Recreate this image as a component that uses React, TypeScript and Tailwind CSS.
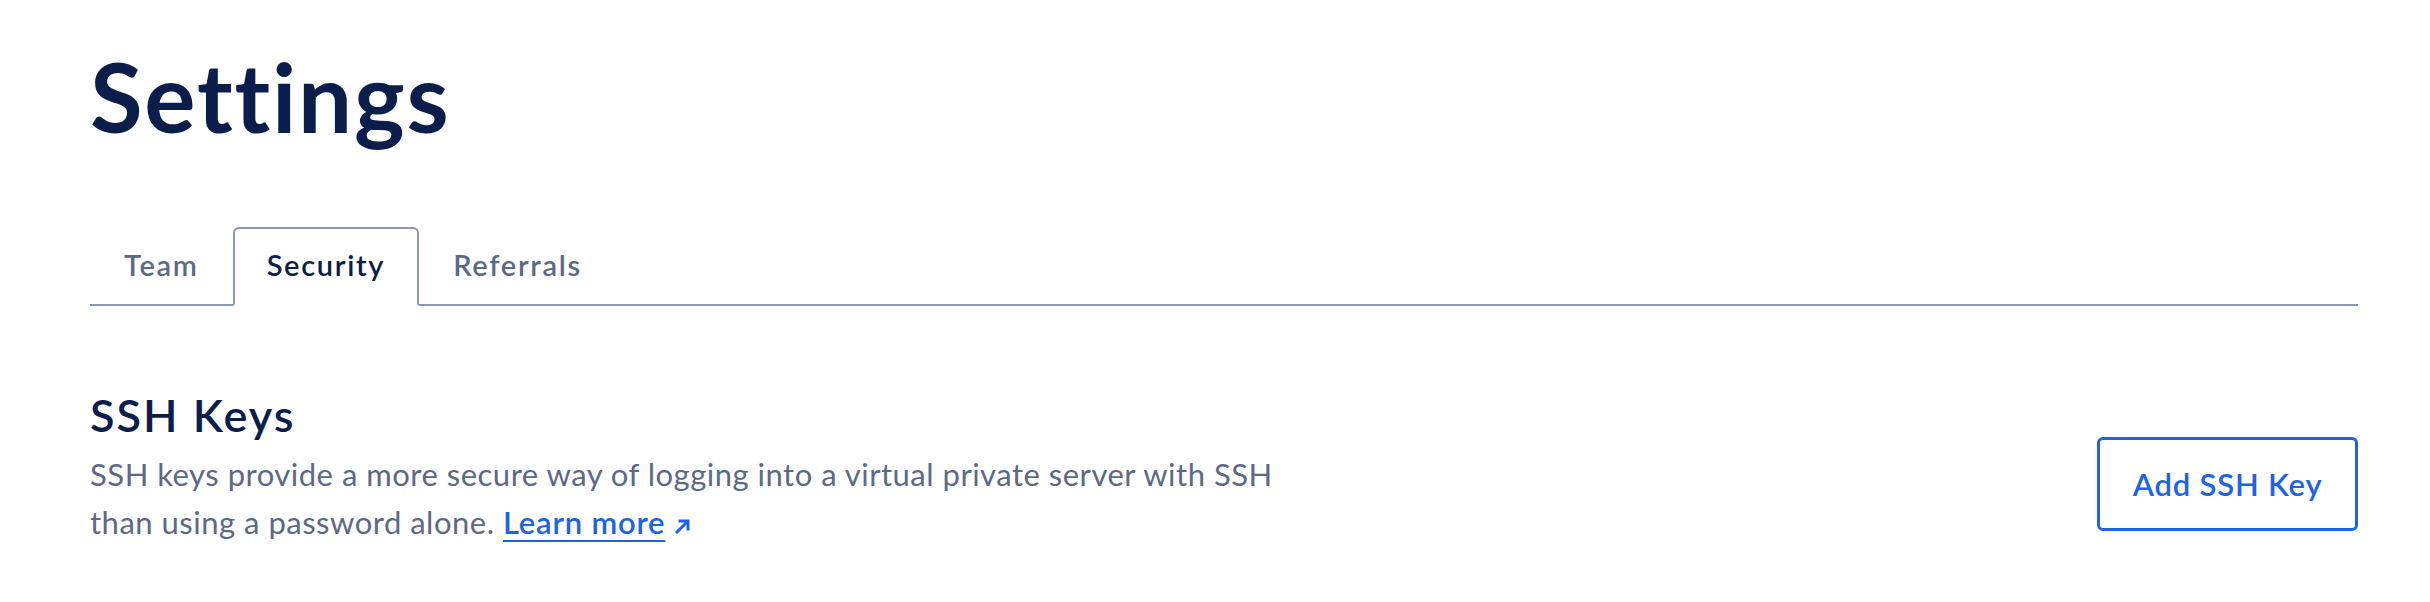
import React from "react"

const tabs = ["Team", "Security", "Referrals"]

function ArrowUpRight() {
  return (
    <svg width="17" height="15" viewBox="0 0 17 15" fill="none" aria-hidden className="inline-block">
      <path d="M3 13 L12.5 3.5" stroke="currentColor" strokeWidth="3" strokeLinecap="square" />
      <path d="M6 2 H14 V10" stroke="currentColor" strokeWidth="3" strokeLinecap="square" />
    </svg>
  )
}

export default function App() {
  return (
    <div
      className="min-h-[602px] w-full bg-white pl-[90px] pr-[72px] pt-[48px]"
      style={{ fontFamily: "Lato, 'Open Sans', sans-serif" }}
    >
      <h1 className="text-[96px] font-bold leading-[96px] tracking-[1.8px] text-[#0b1d4b]">Settings</h1>

      {/* Tabs */}
      <div className="mt-[83px] flex border-b-2 border-[#8d97af]">
        {tabs.map((t) => {
          const active = t === "Security"
          return (
            <div
              key={t}
              className={
                active
                  ? "-mb-[2px] rounded-t-[6px] border-2 border-[#8d97af] border-b-white bg-white px-[32px] pt-[18px] pb-[21px] text-[29px] font-semibold leading-[36px] tracking-[1.7px] text-[#0b1d4b]"
                  : "-mb-[2px] rounded-t-[6px] border-2 border-transparent px-[32px] pt-[18px] pb-[21px] text-[29px] font-semibold leading-[36px] tracking-[1.7px] text-[#5b6987]"
              }
            >
              {t}
            </div>
          )
        })}
      </div>

      {/* SSH keys section */}
      <div className="mt-[84px] flex items-start justify-between">
        <div>
          <h2 className="text-[45px] font-semibold leading-[50px] tracking-[2px] text-[#0b1d4b]">SSH Keys</h2>
          <p className="mt-[10px] text-[31px] leading-[48px] tracking-[0.5px] text-[#5b6987]">
            SSH keys provide a more secure way of logging into a virtual private server with SSH
            <br />
            than using a password alone.{" "}
            <a href="#" className="font-semibold tracking-[0.8px] text-[#1e62e6] underline decoration-2 underline-offset-[6px]">
              Learn more
            </a>
            <span className="ml-[9px] text-[#1e62e6]">
              <ArrowUpRight />
            </span>
          </p>
        </div>
        <button className="mt-[47px] h-[94px] w-[261px] rounded-[6px] border-[3px] border-[#1e62e6] bg-white text-[31px] font-semibold tracking-[0.8px] text-[#1e62e6]">
          Add SSH Key
        </button>
      </div>
    </div>
  )
}
